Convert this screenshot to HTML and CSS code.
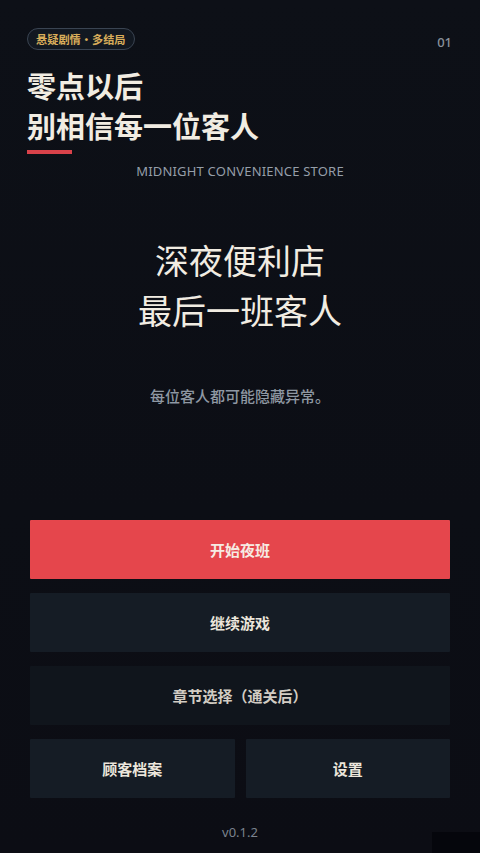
FILE: index.html
```html
<!DOCTYPE html>
<html lang="zh-CN">
<head>
<meta charset="utf-8">
<link rel="stylesheet" href="styles.css">
</head>
<body>
<div class="page">
  <header class="top">
    <div class="top-row">
      <span class="badge">悬疑剧情・多结局</span>
      <span class="num">01</span>
    </div>
    <h1 class="title">零点以后<br>别相信每一位客人</h1>
    <div class="bar"></div>
  </header>
  <p class="en">MIDNIGHT CONVENIENCE STORE</p>
  <h2 class="hero">深夜便利店<br>最后一班客人</h2>
  <p class="sub">每位客人都可能隐藏异常。</p>
  <nav class="menu">
    <button class="btn primary">开始夜班</button>
    <button class="btn">继续游戏</button>
    <button class="btn locked">章节选择（通关后）</button>
    <div class="pair">
      <button class="btn">顾客档案</button>
      <button class="btn">设置</button>
    </div>
  </nav>
  <p class="ver">v0.1.2</p>
  <div class="corner"></div>
</div>
</body>
</html>
```
FILE: styles.css
```css
* { box-sizing: border-box; }
html, body { margin: 0; padding: 0; }
body {
  background: #0c0e15;
  font-family: "Noto Sans CJK SC", "Noto Sans", sans-serif;
  color: #efe9df;
}
.page {
  position: relative;
  width: 480px;
  height: 853px;
  overflow: hidden;
  padding: 28px 30px 0;
  background: linear-gradient(180deg, #0d1017 0%, #0c0e15 60%, #0c0d14 100%);
  display: flex;
  flex-direction: column;
}
.top { margin: 0 -3px; }
.top-row {
  display: flex;
  justify-content: space-between;
  align-items: flex-start;
  height: 22px;
}
.badge {
  display: inline-block;
  height: 22px;
  line-height: 20px;
  padding: 0 8px;
  border: 1px solid #3a4452;
  border-radius: 11px;
  background: #121821;
  color: #d7ac5a;
  font-size: 11.2px;
  font-weight: 700;
}
.num {
  margin-top: 6px;
  margin-right: 1px;
  font-family: "Noto Sans", sans-serif;
  font-size: 13px;
  line-height: 16px;
  font-weight: 500;
  color: #8a929c;
}
.title {
  margin: 15px 0 0;
  font-size: 29px;
  line-height: 40px;
  font-weight: 700;
  color: #f1ece2;
}
.bar {
  margin-top: 5px;
  width: 45px;
  height: 4px;
  background: #d9424a;
}
.en {
  margin: 7px 0 0;
  text-align: center;
  font-family: "Noto Sans", sans-serif;
  font-size: 13px;
  line-height: 20px;
  letter-spacing: 0.2px;
  color: #959ea9;
}
.hero {
  margin: 54px 0 0;
  text-align: center;
  font-size: 34px;
  line-height: 50px;
  font-weight: 400;
  color: #f1ece2;
}
.sub {
  margin: 50px 0 0;
  text-align: center;
  font-size: 15px;
  line-height: 22px;
  font-weight: 500;
  color: #8f98a3;
}
.menu {
  margin-top: 113px;
  display: flex;
  flex-direction: column;
  gap: 14px;
}
.btn {
  height: 59px;
  border: 0;
  border-radius: 1px;
  background: #151c25;
  color: #ece6dc;
  font-family: "Noto Sans CJK SC", sans-serif;
  font-size: 15px;
  font-weight: 700;
}
.btn.primary { background: #e5464c; color: #f6ebe3; }
.btn.locked { background: #10151c; color: #d2ccc3; }
.pair {
  display: grid;
  grid-template-columns: 1fr 1fr;
  gap: 11px;
}
.ver {
  margin: 25px 0 0;
  text-align: center;
  font-family: "Noto Sans", sans-serif;
  font-size: 13px;
  line-height: 18px;
  color: #7b838e;
}
.corner {
  position: absolute;
  right: 0;
  bottom: 0;
  width: 48px;
  height: 21px;
  background: #05060c;
}
```
